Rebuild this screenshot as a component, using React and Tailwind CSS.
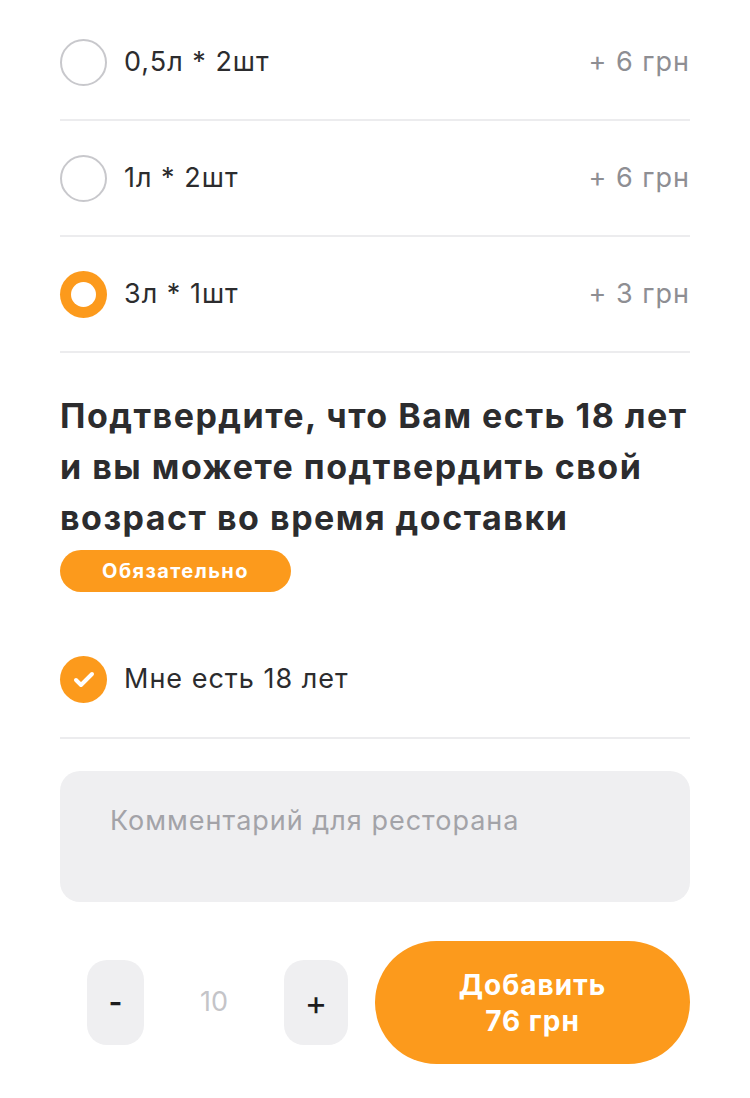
import { Check } from "lucide-react";

const OPTIONS = [
  { label: "0,5л * 2шт", price: "+ 6 грн", selected: false },
  { label: "1л * 2шт", price: "+ 6 грн", selected: false },
  { label: "3л * 1шт", price: "+ 3 грн", selected: true },
];

const Radio = ({ on }) =>
  on ? (
    <div className="w-[47px] h-[47px] rounded-full bg-[#fc9a1c] flex items-center justify-center shrink-0">
      <div className="w-[25px] h-[25px] rounded-full bg-white" />
    </div>
  ) : (
    <div className="w-[47px] h-[47px] rounded-full border-2 border-[#c8c8cc] shrink-0" />
  );

export default function App() {
  return (
    <div className="w-[750px] h-[1098px] bg-white px-[60px] pt-[5px] font-['Inter',sans-serif] text-[#2c2c2e] overflow-hidden">
      {OPTIONS.map((o) => (
        <div key={o.label} className="h-[116px] flex items-center border-b-2 border-[#ececee]">
          <Radio on={o.selected} />
          <div className="ml-[17px] text-[27px] tracking-[1px]">{o.label}</div>
          <div className="ml-auto text-[27px] text-[#8e8e93] tracking-[1px]">{o.price}</div>
        </div>
      ))}

      <h2 className="mt-[37px] text-[34px] leading-[51px] font-bold tracking-[1.5px]">
        Подтвердите, что Вам есть 18 лет и вы можете подтвердить свой возраст во время доставки
      </h2>
      <div className="mt-[7px] w-[231px] h-[42px] rounded-full bg-[#fc9a1c] flex items-center justify-center text-white text-[20px] font-bold tracking-[1.4px]">
        Обязательно
      </div>

      <div className="mt-[30px] h-[117px] flex items-center border-b-2 border-[#ececee]">
        <div className="w-[47px] h-[47px] rounded-full bg-[#fc9a1c] flex items-center justify-center shrink-0">
          <Check className="w-[24px] h-[24px] text-white" strokeWidth={4} />
        </div>
        <div className="ml-[17px] text-[27px] tracking-[1px]">Мне есть 18 лет</div>
      </div>

      <div className="mt-[32px] h-[131px] rounded-[20px] bg-[#efeff1] px-[50px] pt-[30px] text-[27px] text-[#a3a3a8] tracking-[1px]">
        Комментарий для ресторана
      </div>

      <div className="mt-[39px] flex items-center">
        <div className="ml-[27px] w-[57px] h-[85px] rounded-[20px] bg-[#efeff1] flex items-center justify-center text-[30px] font-semibold text-[#1c1c1e]">
          -
        </div>
        <div className="w-[140px] text-center text-[27px] text-[#c4c4c8]">10</div>
        <div className="w-[64px] h-[85px] rounded-[20px] bg-[#efeff1] flex items-center justify-center text-[34px] text-[#1c1c1e]">
          +
        </div>
        <div className="ml-[27px] w-[315px] h-[123px] rounded-full bg-[#fc9a1c] flex flex-col items-center justify-center text-white text-[28px] font-bold leading-[36px] tracking-[1px]">
          <span>Добавить</span>
          <span>76 грн</span>
        </div>
      </div>
    </div>
  );
}
